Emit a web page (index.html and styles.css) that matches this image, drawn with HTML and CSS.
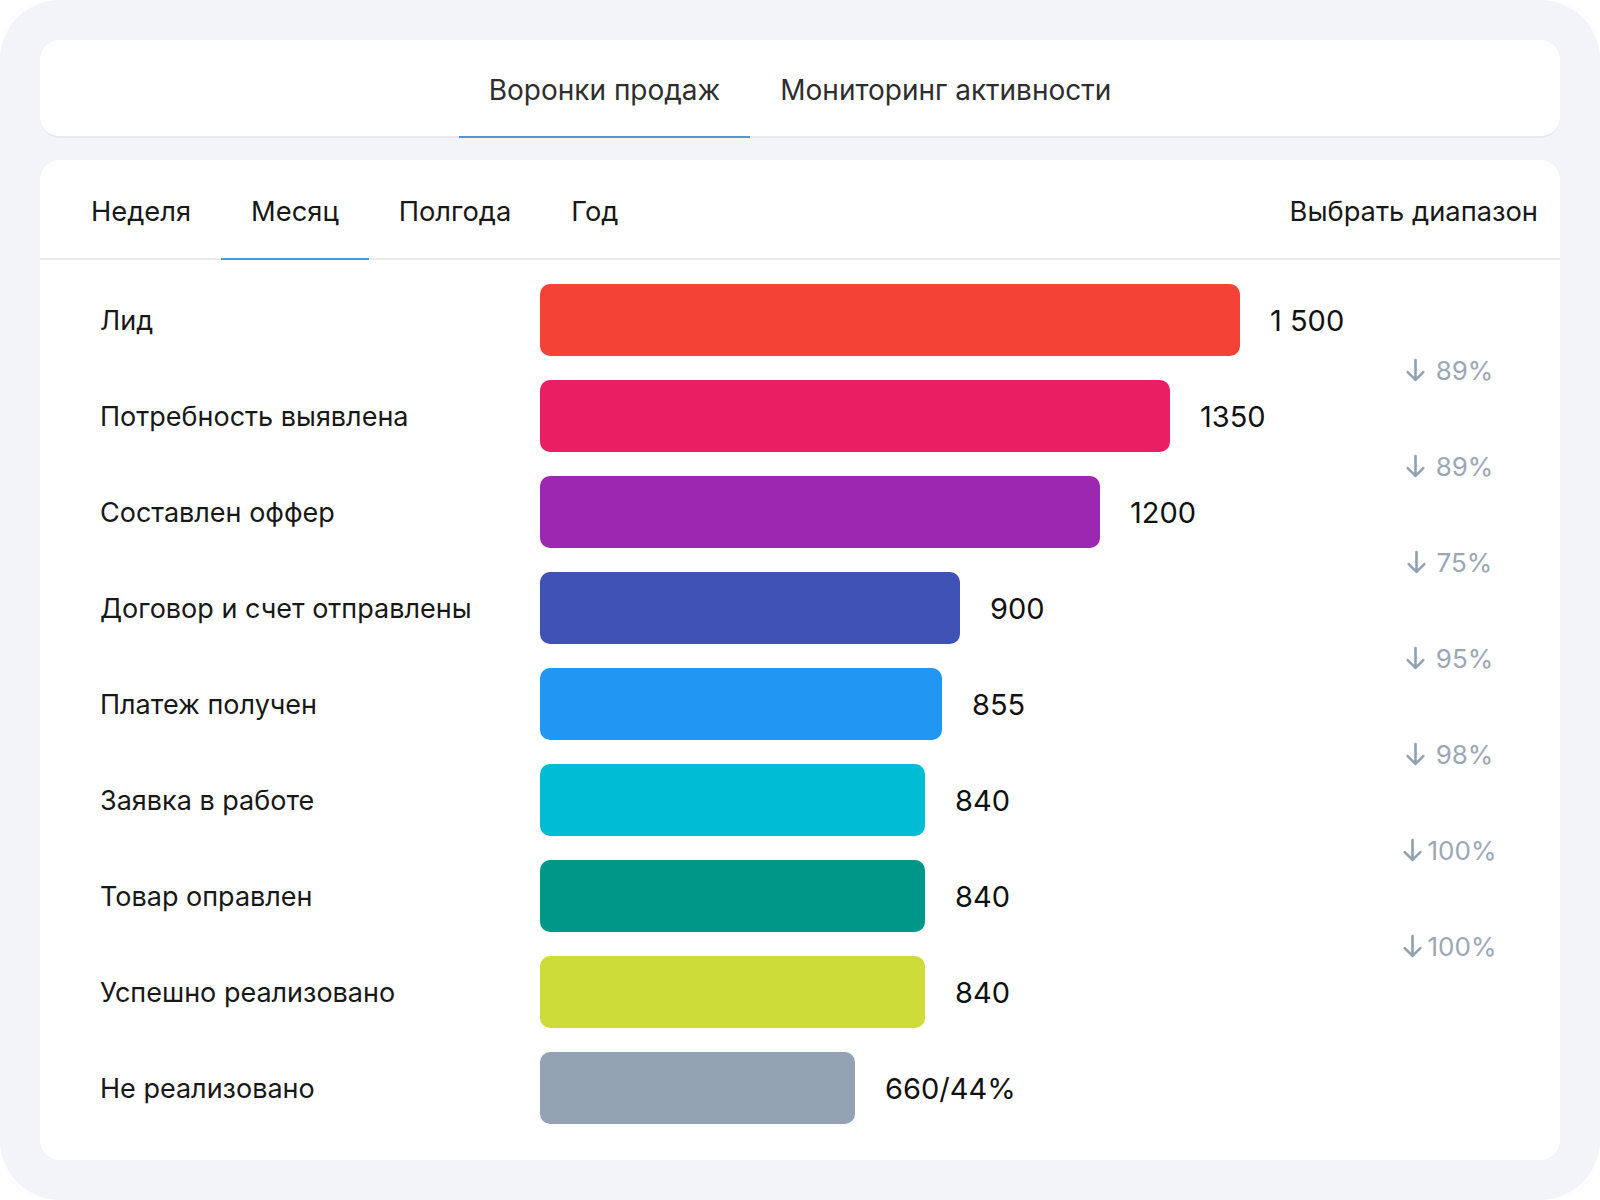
FILE: index.html
```html
<!DOCTYPE html>
<html lang="ru">
<head>
<meta charset="utf-8">
<title>Воронки продаж</title>
<link rel="stylesheet" href="styles.css">
</head>
<body>
<div class="frame">
  <nav class="top-card">
    <div class="top-tab active">Воронки продаж</div>
    <div class="top-tab">Мониторинг активности</div>
  </nav>
  <section class="main-card">
    <header class="period-bar">
      <div class="periods">
        <div class="period">Неделя</div>
        <div class="period active">Месяц</div>
        <div class="period">Полгода</div>
        <div class="period">Год</div>
      </div>
      <div class="range">Выбрать диапазон</div>
    </header>
    <div class="funnel">
      <div class="rows">
        <div class="row"><div class="label">Лид</div><div class="bar-wrap"><div class="bar c1" style="width:700px"></div><span class="value">1 500</span></div></div>
        <div class="row"><div class="label">Потребность выявлена</div><div class="bar-wrap"><div class="bar c2" style="width:630px"></div><span class="value">1350</span></div></div>
        <div class="row"><div class="label">Составлен оффер</div><div class="bar-wrap"><div class="bar c3" style="width:560px"></div><span class="value">1200</span></div></div>
        <div class="row"><div class="label">Договор и счет отправлены</div><div class="bar-wrap"><div class="bar c4" style="width:420px"></div><span class="value">900</span></div></div>
        <div class="row"><div class="label">Платеж получен</div><div class="bar-wrap"><div class="bar c5" style="width:402px"></div><span class="value">855</span></div></div>
        <div class="row"><div class="label">Заявка в работе</div><div class="bar-wrap"><div class="bar c6" style="width:385px"></div><span class="value">840</span></div></div>
        <div class="row"><div class="label">Товар оправлен</div><div class="bar-wrap"><div class="bar c7" style="width:385px"></div><span class="value">840</span></div></div>
        <div class="row"><div class="label">Успешно реализовано</div><div class="bar-wrap"><div class="bar c8" style="width:385px"></div><span class="value">840</span></div></div>
        <div class="row"><div class="label">Не реализовано</div><div class="bar-wrap"><div class="bar c9" style="width:315px"></div><span class="value">660/44%</span></div></div>
      </div>
      <div class="rates">
        <div class="rate"><svg class="arrow" viewBox="0 0 20 24"><path d="M10 2V21M2.5 13.5L10 21L17.5 13.5"/></svg><span>89%</span></div>
        <div class="rate"><svg class="arrow" viewBox="0 0 20 24"><path d="M10 2V21M2.5 13.5L10 21L17.5 13.5"/></svg><span>89%</span></div>
        <div class="rate"><svg class="arrow" viewBox="0 0 20 24"><path d="M10 2V21M2.5 13.5L10 21L17.5 13.5"/></svg><span>75%</span></div>
        <div class="rate"><svg class="arrow" viewBox="0 0 20 24"><path d="M10 2V21M2.5 13.5L10 21L17.5 13.5"/></svg><span>95%</span></div>
        <div class="rate"><svg class="arrow" viewBox="0 0 20 24"><path d="M10 2V21M2.5 13.5L10 21L17.5 13.5"/></svg><span>98%</span></div>
        <div class="rate tight"><svg class="arrow" viewBox="0 0 20 24"><path d="M10 2V21M2.5 13.5L10 21L17.5 13.5"/></svg><span>100%</span></div>
        <div class="rate tight"><svg class="arrow" viewBox="0 0 20 24"><path d="M10 2V21M2.5 13.5L10 21L17.5 13.5"/></svg><span>100%</span></div>
      </div>
    </div>
  </section>
</div>
</body>
</html>
```
FILE: styles.css
```css
* { box-sizing: border-box; }

html, body {
  margin: 0;
  padding: 0;
  background: #ffffff;
}

body {
  font-family: "Inter", "Roboto", "Liberation Sans", sans-serif;
  color: #181818;
}

.frame {
  width: 1600px;
  height: 1200px;
  background: #f3f4f7;
  border-radius: 60px;
  padding: 40px;
  display: flex;
  flex-direction: column;
  gap: 22px;
}

.top-card {
  height: 98px;
  background: #ffffff;
  border-radius: 20px;
  border-bottom: 2px solid #e7e8ec;
  display: flex;
  justify-content: center;
}

.top-tab {
  height: 98px;
  margin-bottom: -2px;
  padding: 4px 30px 0;
  display: flex;
  align-items: center;
  font-size: 28px;
  color: #2e2e2e;
  border-bottom: 2px solid transparent;
}

.top-tab.active {
  border-bottom-color: #4a97db;
}

.main-card {
  flex: 1;
  background: #ffffff;
  border-radius: 20px;
  display: flex;
  flex-direction: column;
}

.period-bar {
  height: 100px;
  border-bottom: 2px solid #e9eaee;
  display: flex;
  justify-content: space-between;
  padding: 0 22px 0 21px;
}

.periods {
  display: flex;
}

.period {
  height: 100px;
  margin-bottom: -2px;
  padding: 4px 30px 0;
  display: flex;
  align-items: center;
  font-size: 27.3px;
  color: #181818;
  border-bottom: 2px solid transparent;
}

.period.active {
  border-bottom-color: #4a97db;
}

.range {
  display: flex;
  align-items: center;
  padding-top: 4px;
  font-size: 27.3px;
  color: #181818;
}

.funnel {
  display: flex;
  padding: 12px 0 24px;
}

.rows {
  flex: 1;
  display: flex;
  flex-direction: column;
}

.row {
  height: 96px;
  display: flex;
  align-items: center;
  padding-left: 60px;
}

.label {
  width: 440px;
  font-size: 27px;
  color: #181818;
}

.bar-wrap {
  display: flex;
  align-items: center;
  gap: 30px;
}

.bar {
  height: 72px;
  border-radius: 10px;
}

.value {
  font-size: 29px;
  color: #111111;
}

.c1 { background: #f44336; }
.c2 { background: #e91e63; }
.c3 { background: #9c27b0; }
.c4 { background: #3f51b5; }
.c5 { background: #2196f3; }
.c6 { background: #00bcd4; }
.c7 { background: #009688; }
.c8 { background: #cddc39; }
.c9 { background: #93a3b3; }

.rates {
  width: 140px;
  margin-right: 41px;
  padding-top: 50px;
  display: flex;
  flex-direction: column;
}

.rate {
  height: 96px;
  display: flex;
  align-items: center;
  justify-content: center;
  gap: 10px;
  font-size: 26px;
  color: #9ba7b4;
}

.rate.tight {
  gap: 5px;
}

.arrow {
  width: 21px;
  height: 25px;
  fill: none;
  stroke: #91a1b0;
  stroke-width: 2.5;
  stroke-linecap: round;
  stroke-linejoin: round;
}
```
